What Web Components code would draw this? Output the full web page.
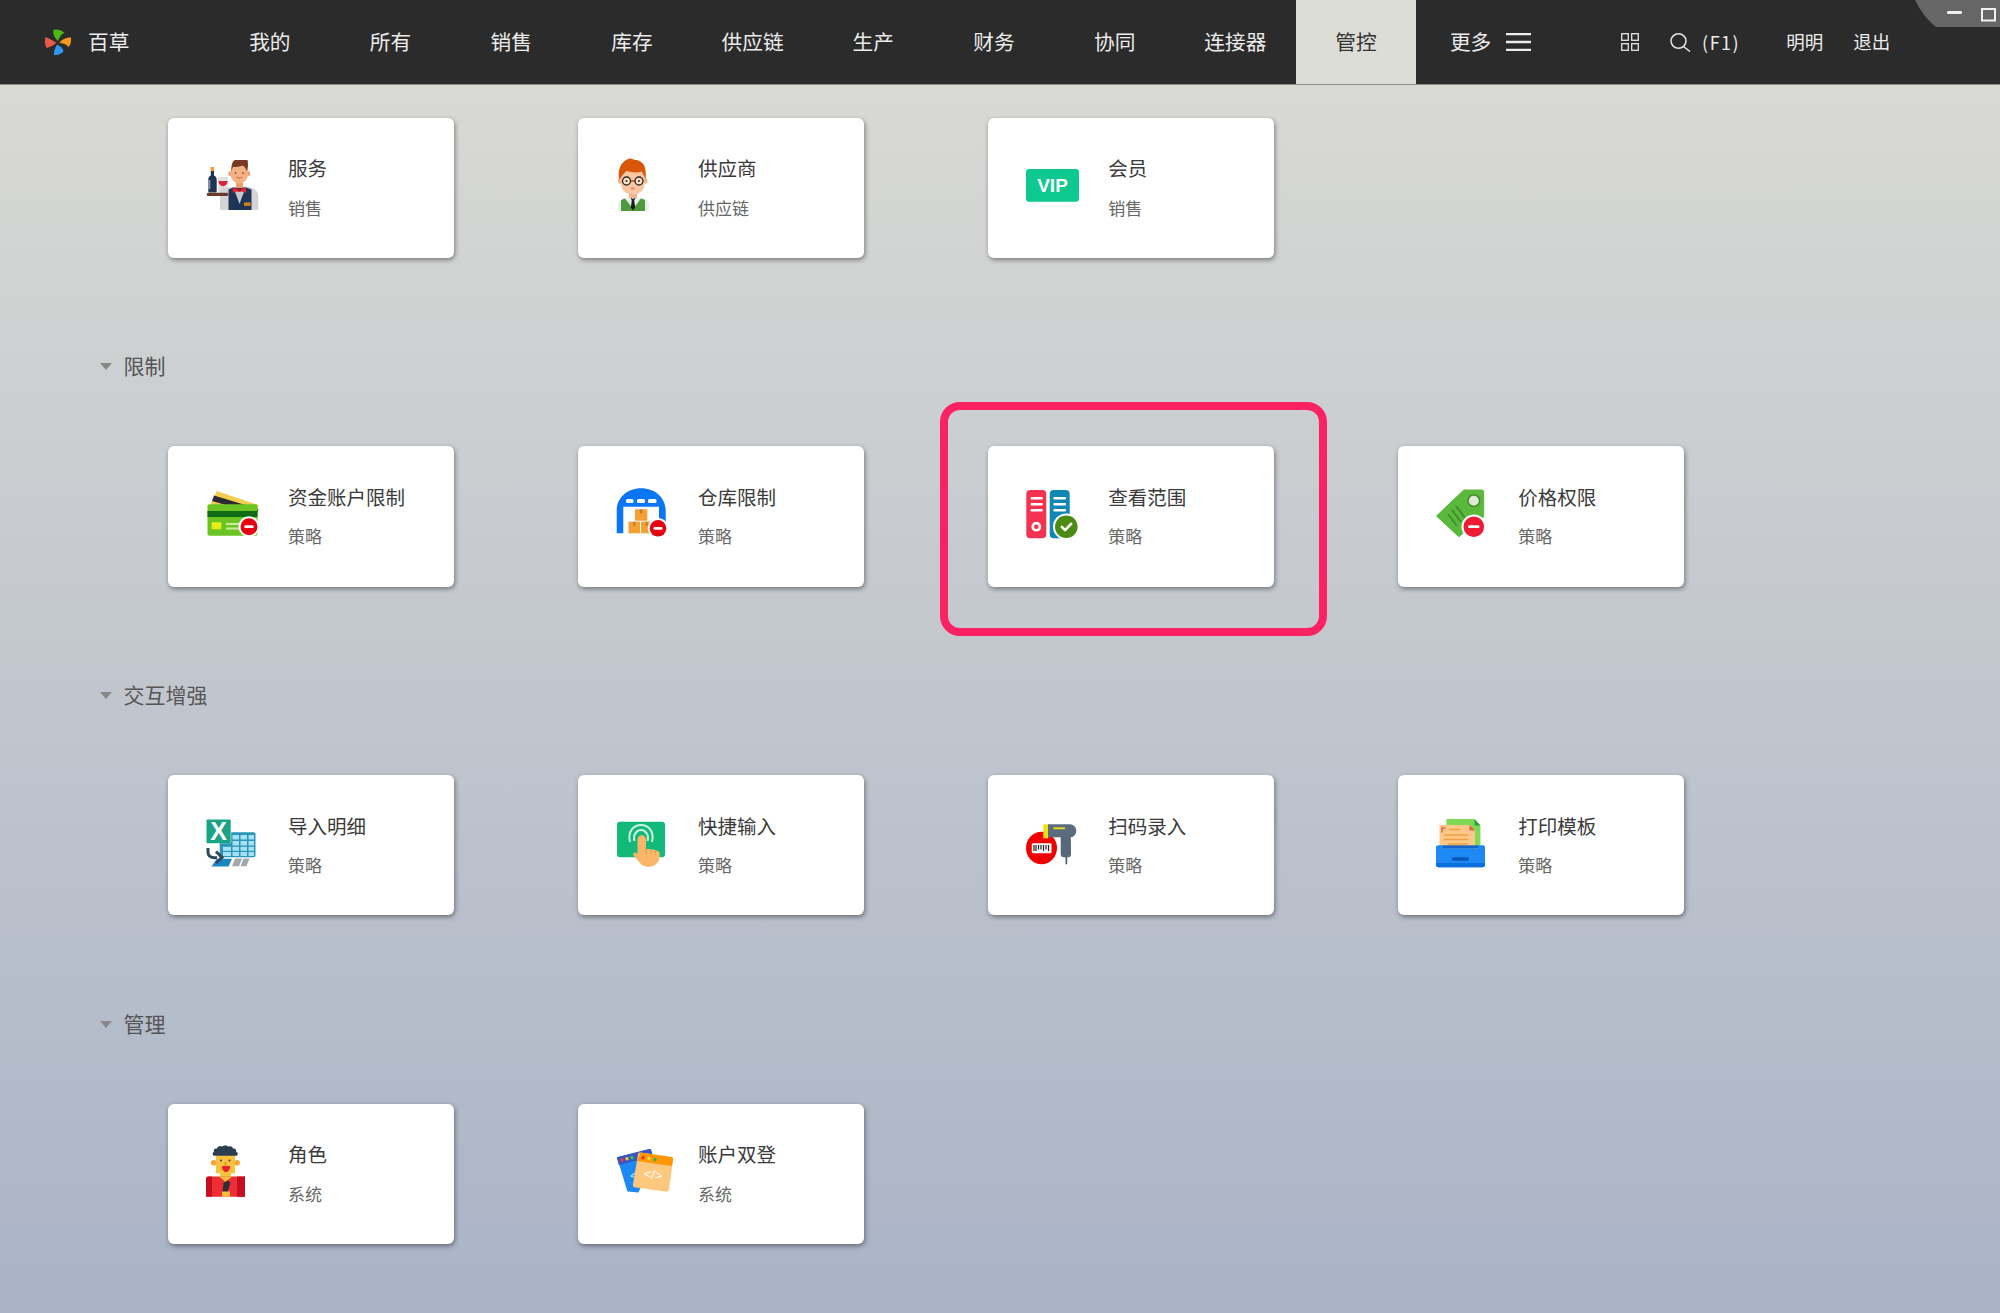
<!DOCTYPE html>
<html lang="zh-CN">
<head>
<meta charset="utf-8">
<title>百草</title>
<style>
html,body{margin:0;padding:0;height:100%;overflow:hidden;font-family:"Noto Sans CJK SC","Noto Sans",sans-serif;}
</style>
</head>
<body>
<app-shell>
  <top-bar slot="bar">
    <nav-tab>我的</nav-tab><nav-tab>所有</nav-tab><nav-tab>销售</nav-tab><nav-tab>库存</nav-tab><nav-tab>供应链</nav-tab><nav-tab>生产</nav-tab><nav-tab>财务</nav-tab><nav-tab>协同</nav-tab><nav-tab>连接器</nav-tab><nav-tab active>管控</nav-tab>
  </top-bar>
  <card-group>
    <app-card icon="waiter" name="服务" sub="销售"></app-card>
    <app-card icon="supplier" name="供应商" sub="供应链"></app-card>
    <app-card icon="vip" name="会员" sub="销售"></app-card>
  </card-group>
  <card-group label="限制">
    <app-card icon="card" name="资金账户限制" sub="策略"></app-card>
    <app-card icon="warehouse" name="仓库限制" sub="策略"></app-card>
    <app-card icon="books" name="查看范围" sub="策略" highlight></app-card>
    <app-card icon="tag" name="价格权限" sub="策略"></app-card>
  </card-group>
  <card-group label="交互增强">
    <app-card icon="excel" name="导入明细" sub="策略"></app-card>
    <app-card icon="touch" name="快捷输入" sub="策略"></app-card>
    <app-card icon="scanner" name="扫码录入" sub="策略"></app-card>
    <app-card icon="print" name="打印模板" sub="策略"></app-card>
  </card-group>
  <card-group label="管理">
    <app-card icon="role" name="角色" sub="系统"></app-card>
    <app-card icon="windows" name="账户双登" sub="系统"></app-card>
  </card-group>
</app-shell>
<script>
const badgeMinus=(x,y,r,c)=>`<circle cx="${x}" cy="${y}" r="${r+2}" fill="#fff"/><circle cx="${x}" cy="${y}" r="${r}" fill="${c}"/><rect x="${x-r*.55}" y="${y-1.4}" width="${r*1.1}" height="2.8" rx="1.2" fill="#fff"/>`;
const ICONS={
waiter:`<rect x="4.6" y="17" width="3.6" height="4" fill="#f0a030"/><path d="M4.8 21h3.2v4.5c2 1 2.7 2.4 2.7 4.2V41.5a1 1 0 0 1-1 1H3.3a1 1 0 0 1-1-1V29.7c0-1.800.7-3.200 2.500-4.200z" fill="#1f3450"/><rect x="2.300" y="30" width="2" height="9" fill="#8d99a8"/>
<path d="M12 27h10v15.500H12z" fill="#e2e2e4"/><path d="M12.500 31h9c0 3-2 5.200-4.500 5.200S12.500 34 12.500 31z" fill="#d8243c"/><rect x="16.300" y="36" width="1.400" height="6.500" fill="#c9c9cc"/>
<path d="M14 39C18 37 24 37 27 37.500L40 36.500 C47 37.500 52 40 52.300 46V60H14z" fill="#d4d4d6"/>
<path d="M22.500 39.500L27 37.500H40L45.500 39.500V60H22.500z" fill="#1f3557"/><path d="M28 39L33.500 54 39 39z" fill="#c6c8ca"/>
<rect x="38" y="52.500" width="6.500" height="3.400" fill="#e48a1c"/><rect x="38" y="54.500" width="6.500" height="1" fill="#b86a12"/>
<ellipse cx="24.300" cy="23.500" rx="2" ry="2.500" fill="#ee9e6d"/><ellipse cx="42.300" cy="23.500" rx="2" ry="2.500" fill="#ee9e6d"/>
<rect x="30" y="30" width="7" height="8" fill="#ee9e6d"/><ellipse cx="33.300" cy="23.500" rx="9" ry="10" fill="#f6b184"/>
<path d="M25.500 21C25 15 26.500 11 29 10h12.500c.8 3.500.6 8-.5 11-1.500-3-3-5-4.500-5.500-3 1.500-8 1.500-9.500 1.500-.7 1-1 2.500-1.500 4z" fill="#7a3a22"/>
<path d="M30.500 27c1.800 1.500 4 1.500 5.800 0" stroke="#c4604a" stroke-width="1" fill="none"/><circle cx="29.500" cy="23" r=".8" fill="#4a2a1c"/><circle cx="37" cy="23" r=".8" fill="#4a2a1c"/>
<path d="M26.700 37.500l6.700 2 6.700-2v5.200l-6.700-2-6.700 2z" fill="#e3232f"/><rect x="31.500" y="38.700" width="3.800" height="3" rx=".8" fill="#b8141f"/>
<rect x="0.700" y="42.700" width="21.500" height="3.400" rx="1.500" fill="#6b3a2a"/>`,
supplier:`<path d="M2 61V54c0-3 4-5 9-6.500h14c5 1.500 8 3.500 8 6.500v7z" fill="#e8eeea"/><path d="M9 48.500L17 59l8-10.500 4 1.500V61H5V50z" fill="#4f9b3c"/>
<path d="M14.500 47.500L17 49l2.500-1.500-1.300 3 1 7-2.200 3-2.200-3 1-7z" fill="#1c1c1c"/><rect x="13" y="40" width="8" height="8" fill="#f1b48c"/>
<circle cx="4.500" cy="31" r="2.800" fill="#f3b68c"/><circle cx="28.800" cy="31" r="2.800" fill="#f3b68c"/><path d="M5 22C5 21 28 21 28.500 22v12c0 6-5 10.500-11.700 10.500S5 40 5 34z" fill="#f8c6a2"/>
<path d="M3.500 30C1 22 4 12 12 9c3-1.500 5 .5 8 1 5 .5 8 4 9 8 1 4 1 8 .5 12-1-3-2-6.500-4-8.500-4 1.500-10 1-15-.5-2.500 2-5 5-7 9z" fill="#d9570a"/>
<circle cx="10.500" cy="31" r="4" fill="#f8dcc8" stroke="#2a2320" stroke-width="1.300"/><circle cx="23" cy="31" r="4" fill="#f8dcc8" stroke="#2a2320" stroke-width="1.300"/><path d="M14.500 31h4.500" stroke="#a8321c" stroke-width="1.300"/><circle cx="10.500" cy="31" r="1" fill="#333"/><circle cx="23" cy="31" r="1" fill="#333"/>
<ellipse cx="16.800" cy="38.500" rx="2.200" ry="1.300" fill="#ee8f7e"/>`,
vip:`<rect x="0" y="19" width="53" height="32.800" rx="3" fill="#0dc98f"/><text x="26.500" y="41.800" text-anchor="middle" font-family="Liberation Sans,sans-serif" font-weight="700" font-size="19" fill="#fff">VIP</text>`,
card:`<path d="M10.700 13L52.600 27 45 44 .5 35z" fill="#f3cd4e"/><path d="M8 17.500L52.500 31l-1.800 5L6 23z" fill="#2c2a33"/>
<rect x="1.500" y="26.300" width="50" height="31.400" rx="2" fill="#6cc424"/><rect x="1.500" y="33" width="50" height="6" fill="#0f6b14"/><rect x="5.600" y="44.300" width="9.700" height="7" rx="1" fill="#e9ec15"/><rect x="20" y="45" width="13" height="2" fill="#c7ec9a"/><rect x="20" y="49.500" width="13" height="2" fill="#c7ec9a"/>${badgeMinus(43,48.700,8.500,'#e60012')}`,
warehouse:`<path d="M.7 55.300V33C.7 20 11 10.300 25.200 10.300S49.700 20 49.700 33V55.300H43V28.700H7.300V55.300z" fill="#0a76f5"/><rect x="10" y="21" width="7.500" height="4" rx="1.500" fill="#fff"/><rect x="21" y="21" width="8" height="4" rx="1.500" fill="#fff"/><rect x="32" y="21" width="8.500" height="4" rx="1.500" fill="#fff"/>
<rect x="19" y="31.300" width="12.300" height="11.400" fill="#f5a034"/><rect x="23.800" y="31.300" width="2.600" height="4" fill="#b97a28"/><rect x="12.500" y="43.700" width="11.500" height="11.600" fill="#f5a034"/><rect x="17" y="43.700" width="2.400" height="4" fill="#c8832c"/><rect x="25" y="43.700" width="11.500" height="11.600" fill="#f5a034"/><rect x="29.500" y="43.700" width="2.400" height="4" fill="#c8832c"/>${badgeMinus(42,50.300,8.300,'#e60012')}`,
books:`<rect x=".3" y="12" width="20" height="48.300" rx="4" fill="#f5324f"/><path d="M5.700 20.300h10M5.700 26.300h10M5.700 32.300h10" stroke="#fff" stroke-width="2.400" stroke-linecap="round"/><circle cx="10.300" cy="48.700" r="3.600" fill="#f5324f" stroke="#fff" stroke-width="2.600"/>
<rect x="23.700" y="12" width="20" height="48.300" rx="4" fill="#0f86b4"/><path d="M28.500 20.300h10.500M28.500 26.300h10.500M28.500 32.300h10.500" stroke="#fff" stroke-width="2.400" stroke-linecap="round"/><circle cx="40.300" cy="48.700" r="13.300" fill="#fff"/><circle cx="40.300" cy="48.700" r="11.300" fill="#4a8c12"/><path d="M35.800 48.900l3.300 3.300 6-6.400" fill="none" stroke="#fff" stroke-width="2.600" stroke-linecap="round" stroke-linejoin="round"/>`,
tag:`<path d="M27.800 12H45.700a2 2 0 0 1 2 2V38.700L22.800 58.700.5 38z" fill="#5ab83c" stroke="#5ab83c" stroke-linejoin="round" stroke-width="1"/><circle cx="37.800" cy="22.700" r="5.800" fill="#dfe9d8" stroke="#3e8a2a" stroke-width="1.500"/><path d="M12 36l9 12M16 32l9 12M20 28l9 12" stroke="#3f8f2c" stroke-width="2"/>${badgeMinus(37.800,48.700,10.300,'#ef1a34')}`,
excel:`<path d="M13.700 27.300a2 2 0 0 1 2-2H47.500a2 2 0 0 1 2 2V48.300a2 2 0 0 1-2 2H13.700z" fill="#2b95b9"/><g fill="#a5e0f3"><rect x="26.500" y="28" width="6.500" height="4.500"/><rect x="34.500" y="28" width="6.500" height="4.500"/><rect x="42.500" y="28" width="5.500" height="4.500"/><rect x="26.500" y="34" width="6.500" height="4.500"/><rect x="34.500" y="34" width="6.500" height="4.500"/><rect x="42.500" y="34" width="5.500" height="4.500"/><rect x="17" y="39.800" width="8" height="4"/><rect x="26.500" y="39.800" width="6.500" height="4"/><rect x="34.500" y="39.800" width="6.500" height="4"/><rect x="42.500" y="39.800" width="5.500" height="4"/><rect x="17" y="45" width="8" height="4"/><rect x="26.500" y="45" width="6.500" height="4"/><rect x="34.500" y="45" width="6.500" height="4"/><rect x="42.500" y="45" width="5.500" height="4"/></g>
<rect x="0" y="12" width="25.200" height="24.300" rx="1.500" fill="#fff"/><rect x=".5" y="12.500" width="24.200" height="23.800" rx="1" fill="#1aa384"/><text x="12.600" y="32.500" text-anchor="middle" font-family="Liberation Sans,sans-serif" font-weight="700" font-size="25" fill="#fff">X</text>
<path d="M11 51.500h15l-3.500 7.700h-17z" fill="#1a86c0" transform="translate(0 .2)"/><path d="M29 51.500h7l-3 7.700h-7zM37.500 51.500h6l-3 7.700h-6z" fill="#a3a8ae"/><path d="M2 41v4c0 4 3 5.800 7 5.800H11" fill="none" stroke="#30465f" stroke-width="3"/><path d="M10 44.500l6 6-6 5.500" fill="none" stroke="#30465f" stroke-width="3"/>`,
touch:`<rect x="1" y="14.700" width="48" height="35.600" rx="3" fill="#13b978"/><path d="M14 35c-3-12 5-17 11-17s14 5 11 17" fill="none" stroke="#cdf3e2" stroke-width="2"/><path d="M18.500 34c-2-7 3-11 6.500-11s8.500 4 6.500 11" fill="none" stroke="#cdf3e2" stroke-width="2"/>
<path d="M21.500 32.500a4.200 4.200 0 0 1 8.500 0V42c4-.5 10 .5 13.500 3 .5 3 .5 7-1.500 10-2 3-5 4.700-9 4.700-5 0-8-2-10-5l-5.500-6.500c-1-2 1-3.200 2.500-2.500l1.500 1.500z" fill="#f9b767"/><path d="M30 42v5M35 42.800V47M39.500 44.200V47.500" stroke="#e09a48" stroke-width="1" fill="none"/>`,
scanner:`<ellipse cx="15.500" cy="41" rx="15.500" ry="16.300" fill="#f20000"/><rect x="17.300" y="17.300" width="5" height="14" fill="#f2df12"/><rect x="5.800" y="36.300" width="19.700" height="10" rx="1" fill="#fff"/><path d="M8 38v6M10 38v6M12.500 38v4.500M15 38v4.500M17.500 38v6M20 38v4.500M22.500 38v6" stroke="#222" stroke-width="1.200"/>
<path d="M34.700 30h10.100l.200 17c0 2-1 3.300-2.800 3.300h-4.400c-1.800 0-3.100-1-3.100-3.300z" fill="#566879"/><path d="M22 17.300H44a6.300 6.300 0 0 1 6.300 6.500A6.300 6.300 0 0 1 44 30.300H22z" fill="#5a6c7e"/><rect x="27.400" y="20.400" width="11.500" height="1.800" fill="#f2df12"/><rect x="39.500" y="50" width="1.700" height="7.300" fill="#4a5a6a"/>`,
print:`<path d="M10.400 12H38.500l5.900 6.500V41H10.400z" fill="#7ed957"/><path d="M38.500 12l5.900 6.500h-5.900z" fill="#2f9e44"/><path d="M3.500 18H33.500L39 23.500V46H3.500z" fill="#fcc88a"/><path d="M33.500 18L39 23.500h-5.500z" fill="#e6613a"/><path d="M6 25.500V21h3.500" fill="none" stroke="#e6613a" stroke-width="1.500"/><path d="M13 22.500h11M8 28h24M8 32.500h24M12 37h20" stroke="#f0a13c" stroke-width="1.500"/>
<path d="M0 40.300a2 2 0 0 1 2-2h5v3h35v-3h5a2 2 0 0 1 2 2V58a2.500 2.500 0 0 1-2.500 2.300H2.500A2.500 2.500 0 0 1 0 58z" fill="#1e88f5"/><path d="M0 56h49v2a2.500 2.500 0 0 1-2.500 2.300h-44A2.500 2.500 0 0 1 0 58z" fill="#0b6fe0"/><rect x="7" y="38.300" width="35" height="3" fill="#1565c8"/><rect x="16" y="50.300" width="17" height="3.400" rx="1.700" fill="#0a55b8"/>`,
role:`<circle cx="7.700" cy="26.700" r="2.800" fill="#f2a63a"/><circle cx="31.100" cy="26.700" r="2.800" fill="#f2a63a"/><rect x="10" y="17" width="19" height="20.300" fill="#f9c13c"/><path d="M14 37h11v4l-5.500 4L14 41z" fill="#f9c13c"/>
<path d="M8 19.700c-1.800-.5-1.500-3.500 0-4-1-3 2-3.500 3-3 0-2.500 4-3.500 5-2 1.500-1.500 5-1.500 6.500 0 2-1 4.500 0 4.500 2 2-.5 4 1.500 3 3 2 .5 2.500 3.500.5 4z" fill="#2b3e50"/><circle cx="15" cy="24.500" r="1" fill="#333"/><circle cx="23.500" cy="24.500" r="1" fill="#333"/><rect x="18.500" y="26" width="2" height="3.500" fill="#e2962a"/><path d="M16 30h8c0 4-2 6-4 6s-4-2-4-6z" fill="#e7202c"/>
<path d="M0 43a2.500 2.500 0 0 1 2.500-2.500H39V60.700H0z" fill="#ee2d34"/><path d="M0 43a2.500 2.500 0 0 1 2.500-2.500H6V60.700H0zM31 40.500h8V60.700h-8z" fill="#c50f1f"/><path d="M13 40.500h13l-6.500 5.500z" fill="#f9c13c"/><path d="M17.500 47l4-2.500 3 2-3 9.500h-5z" fill="#2d2d33"/><rect x="16" y="55.500" width="8" height="5.200" fill="#f9c13c"/>`,
windows:`<path d="M1 21.300L34.400 13l3 11-15 32.500-11 -1z" fill="#1e88f5"/><path d="M.8 21.300L33 13a2 2 0 0 1 2.400 1.400L37 20 3 29a2 2 0 0 1-.2 0z" fill="#3a55c0"/><circle cx="6" cy="24" r="1.700" fill="#f23b3b"/><circle cx="11" cy="22.800" r="1.700" fill="#f2c53b"/><circle cx="16" cy="21.500" r="1.700" fill="#36c24c"/><text x="15" y="44" font-family="Liberation Sans,sans-serif" font-size="11" fill="#d8ecff" transform="rotate(-14 15 44)">&lt;</text>
<path d="M24.300 16.500L55.500 21a2 2 0 0 1 1.600 2.200L53 54a2 2 0 0 1-2.200 1.700L18.500 51.200a2 2 0 0 1-1.600-2.200L22 18.200a2 2 0 0 1 2.300-1.700z" fill="#fdc77e"/><path d="M24.300 16.500L55.500 21a2 2 0 0 1 1.600 2.200L55.800 30 21 25z" fill="#ff9800"/><circle cx="27" cy="21.700" r="1.700" fill="#e8332c"/><circle cx="33" cy="22.500" r="1.700" fill="#f2d73b"/><circle cx="39" cy="23.500" r="1.700" fill="#30b050"/><text x="37" y="43" text-anchor="middle" font-family="Liberation Sans,sans-serif" font-size="13" fill="#fff" transform="rotate(8 37 40)">&lt;/&gt;</text>`
};

class AppIcon extends HTMLElement{
  constructor(){super();this.attachShadow({mode:'open'});}
  connectedCallback(){
    this.shadowRoot.innerHTML=`<style>:host{display:block;width:70px;height:70px;flex:none}svg{display:block;width:70px;height:70px;overflow:visible}</style><svg viewBox="0 0 70 70" xmlns="http://www.w3.org/2000/svg">${ICONS[this.getAttribute('name')]||''}</svg>`;
  }
}
class AppCard extends HTMLElement{
  constructor(){super();this.attachShadow({mode:'open'});}
  connectedCallback(){
    const hl=this.hasAttribute('highlight');
    this.shadowRoot.innerHTML=`<style>
    :host{display:block;position:relative;height:140.300px}
    .card{box-sizing:border-box;height:100%;background:#fff;border-radius:6px;box-shadow:1px 2px 5px rgba(0,0,0,.42);display:flex;align-items:flex-start;padding:32px 0 0 38.500px;gap:12px}
    .txt{display:flex;flex-direction:column;padding-top:3.500px}
    .t{font-size:19.500px;line-height:30px;color:#3a3a3a;white-space:nowrap}
    .s{font-size:17px;line-height:24px;color:#666;margin-top:12.500px;white-space:nowrap}
    .hl{position:absolute;left:-48px;right:-53px;top:-44px;bottom:-49px;border:8px solid #fb2264;border-radius:20px;box-sizing:border-box;pointer-events:none}
    </style><div class="card"><app-icon name="${this.getAttribute('icon')}"></app-icon><div class="txt"><div class="t">${this.getAttribute('name')}</div><div class="s">${this.getAttribute('sub')}</div></div></div>${hl?'<div class="hl"></div>':''}`;
  }
}
class CardGroup extends HTMLElement{
  constructor(){super();this.attachShadow({mode:'open'});}
  connectedCallback(){
    const l=this.getAttribute('label');
    this.shadowRoot.innerHTML=`<style>
    :host{display:block}
    .h{height:40px;display:flex;align-items:center;padding-left:99.500px;margin:87.400px 0 61px;color:#555;font-size:21px;gap:12px}
    .h i{width:0;height:0;border-left:6px solid transparent;border-right:6px solid transparent;border-top:7px solid #888;margin-top:3px}
    .g{display:grid;grid-template-columns:repeat(4,286.600px);column-gap:123.500px;padding-left:167.500px}
    </style>${l?`<div class="h"><i></i><span>${l}</span></div>`:''}<div class="g"><slot></slot></div>`;
  }
}
class NavTab extends HTMLElement{
  constructor(){super();this.attachShadow({mode:'open'});
    this.shadowRoot.innerHTML=`<style>
    :host{display:flex;align-items:center;justify-content:center;box-sizing:border-box;width:120.700px;height:84px;padding-bottom:2px;font-size:20.700px;color:#ececec;flex:none}
    :host([active]){background:#dcddd7;color:#333}
    </style><slot></slot>`;}
}
class TopBar extends HTMLElement{
  constructor(){super();this.attachShadow({mode:'open'});
    this.shadowRoot.innerHTML=`<style>
    :host{display:block;position:relative;height:84px;background:#2b2b2b;box-shadow:0 1px 0 #8d8e8b;color:#ececec;overflow:hidden}
    .row{display:flex;align-items:center;height:84px}
    .brand{display:flex;align-items:center;width:209.500px;padding:0 0 2px 44px;box-sizing:border-box;font-size:20.700px;gap:17px;flex:none}
    .brand svg{width:27px;height:27px;margin-top:1px;flex:none}
    .tabs{display:flex;flex:none}
    .more{display:flex;align-items:center;margin-left:33.500px;gap:15px;font-size:20.700px;margin-top:-2px;flex:none}
    .more span{line-height:24px}
    .grid{margin-left:89.500px;width:18px;height:18px;flex:none}
    .search{display:flex;align-items:center;margin-left:31.300px;gap:11px;font-size:18px;letter-spacing:1.500px;flex:none}
    .search span{margin-top:-1px;margin-left:0}
    .a{font-size:18.500px;flex:none;margin-top:-2px}
    .win{position:absolute;right:0;top:0;width:85px;height:27px}
    </style>
    <div class="row">
      <div class="brand"><svg viewBox="0 0 27 27"><path d="M14 13C10 9 8 5 10 1.500 13 1 18 2 20.500 5 17 6 15.500 9 14 13z" fill="#4cb814"/><path d="M15.500 15C17 12 22 9 27.500 9.500 27.500 13 26.500 17 24.500 19 22 16 19 15 15.500 15z" fill="#f7971d"/><path d="M13 16.500C16 18 19 20 19.500 23 18 26 14 27 10 27.500 9.500 24 11 20 13 16.500z" fill="#2f96f0"/><path d="M12 14.500C8 12 4 10 1.500 9 .5 12 .5 16 2.500 20 6 19 11 17 12 14.500z" fill="#ea5a4a"/></svg><span>百草</span></div>
      <div class="tabs"><slot></slot></div>
      <div class="more"><span>更多</span><svg width="25" height="18" viewBox="0 0 25 18" style="margin-top:2px"><path d="M0 1h25M0 9h25M0 17h25" stroke="#ececec" stroke-width="2.400"/></svg></div>
      <svg class="grid" viewBox="0 0 18 18" fill="none" stroke="#e6e6e6" stroke-width="1.300"><rect x=".7" y=".7" width="6.600" height="6.600"/><rect x="10.700" y=".7" width="6.600" height="6.600"/><rect x=".7" y="10.700" width="6.600" height="6.600"/><rect x="10.700" y="10.700" width="6.600" height="6.600"/></svg>
      <div class="search"><svg width="21" height="19" viewBox="0 0 21 19" fill="none" stroke="#e6e6e6" stroke-width="1.500"><ellipse cx="8.500" cy="8" rx="7.500" ry="7.200"/><path d="M13.500 13.500L20 18.500"/></svg><span>(F1)</span></div>
      <span class="a" style="margin-left:46.200px">明明</span><span class="a" style="margin-left:29.800px">退出</span>
    </div>
    <svg class="win" viewBox="0 0 85 27"><path d="M0 0H85V27H21C12 20 5 10 0 0z" fill="#666"/><rect x="32" y="11" width="15" height="3" rx="1.200" fill="#f0f0f0"/><rect x="67" y="9" width="13" height="11.500" fill="none" stroke="#f0f0f0" stroke-width="2"/></svg>`;}
}
class AppShell extends HTMLElement{
  constructor(){super();this.attachShadow({mode:'open'});
    this.shadowRoot.innerHTML=`<style>
    :host{display:block;height:1313px;overflow:hidden;background:linear-gradient(180deg,#d9dad5 0%,#d9dad5 5%,#aab3c7 100%);font-family:"Noto Sans CJK SC","Noto Sans",sans-serif}
    .main{padding-top:33.700px}
    </style><slot name="bar"></slot><div class="main"><slot></slot></div>`;}
}
customElements.define('app-icon',AppIcon);
customElements.define('app-card',AppCard);
customElements.define('card-group',CardGroup);
customElements.define('nav-tab',NavTab);
customElements.define('top-bar',TopBar);
customElements.define('app-shell',AppShell);
</script>
</body>
</html>
